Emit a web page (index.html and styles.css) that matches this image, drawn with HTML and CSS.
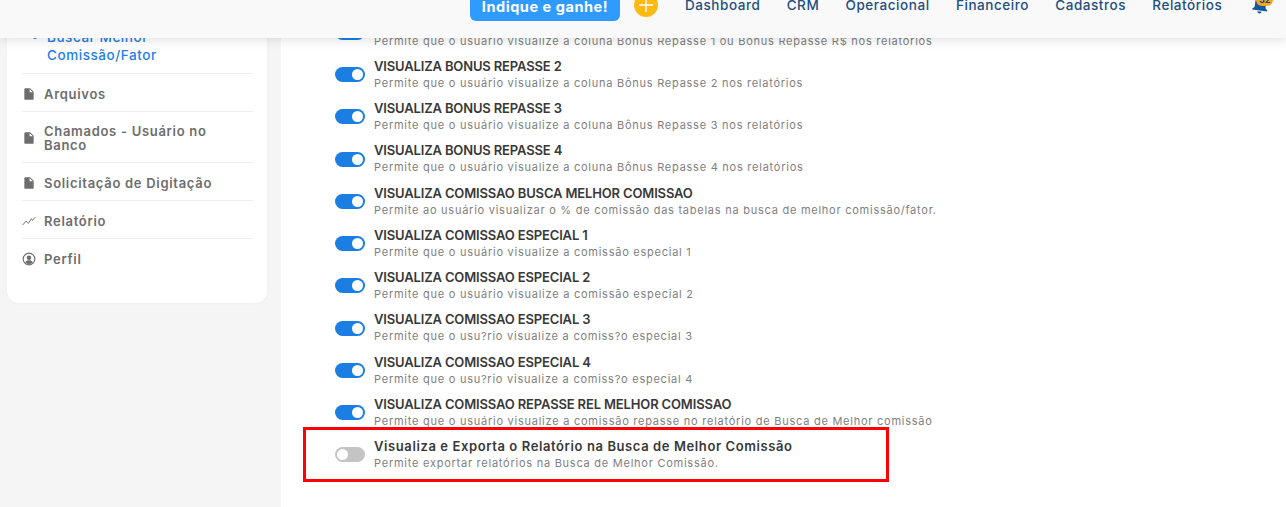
FILE: index.html
```html
<!DOCTYPE html>
<html lang="pt-BR">
<head>
<meta charset="utf-8">
<title>Permissões</title>
<link rel="stylesheet" href="styles.css">
</head>
<body>
<header class="topbar">
  <div class="topbar-row">
    <a class="cta">Indique e ganhe!</a>
    <span class="plus"><svg width="24" height="24" viewBox="0 0 24 24"><path d="M12 5v14M5 12h14" stroke="#fff" stroke-width="1.4" fill="none"/></svg></span>
    <nav class="nav">
      <a>Dashboard</a><a>CRM</a><a>Operacional</a><a>Financeiro</a><a>Cadastros</a><a>Relatórios</a>
    </nav>
    <span class="bell">
      <svg width="18" height="26" viewBox="0 0 18 26"><path transform="rotate(8 9 20)" d="M9 25.500a2.200 2.200 0 0 0 2.200-2H6.800a2.200 2.200 0 0 0 2.200 2zM16.500 21.500l-2-2v-8c0-3-1.700-5.300-4-5.800V5a1.500 1.500 0 0 0-3 0v.7c-2.300.5-4 2.800-4 5.800v8l-2 2v1h15z" fill="#125a9c"/></svg>
      <span class="bell-badge">32</span>
    </span>
  </div>
</header>

<div class="layout">
  <aside class="side">
    <div class="card">
      <div class="sub-item">
        <span class="dot"></span>
        <a class="sub-link">Buscar Melhor Comissão/Fator</a>
      </div>
      <a class="menu-item"><svg class="ico" viewBox="0 0 24 24"><path d="M6 2h8l6 6v12a2 2 0 0 1-2 2H6a2 2 0 0 1-2-2V4a2 2 0 0 1 2-2zm7 1.500V9h5.500z" fill-rule="evenodd"/></svg><span class="menu-label">Arquivos</span></a>
      <a class="menu-item tall"><svg class="ico" viewBox="0 0 24 24"><path d="M6 2h8l6 6v12a2 2 0 0 1-2 2H6a2 2 0 0 1-2-2V4a2 2 0 0 1 2-2zm7 1.500V9h5.500z" fill-rule="evenodd"/></svg><span class="menu-label">Chamados - Usuário no Banco</span></a>
      <a class="menu-item"><svg class="ico" viewBox="0 0 24 24"><path d="M6 2h8l6 6v12a2 2 0 0 1-2 2H6a2 2 0 0 1-2-2V4a2 2 0 0 1 2-2zm7 1.500V9h5.500z" fill-rule="evenodd"/></svg><span class="menu-label">Solicitação de Digitação</span></a>
      <a class="menu-item"><svg class="ico" viewBox="0 0 24 24"><path d="M1 19l6-7 4 4 5-8 2 3 5-6" fill="none" stroke="#6d6d6d" stroke-width="1.600"/></svg><span class="menu-label">Relatório</span></a>
      <a class="menu-item"><svg class="ico" viewBox="0 0 24 24"><circle cx="12" cy="12" r="10" fill="none" stroke="#6d6d6d" stroke-width="2"/><circle cx="12" cy="10" r="3.800"/><path d="M5.500 18c1-3 4-4 6.500-4s5.500 1 6.500 4a9 9 0 0 1-13 0z"/></svg><span class="menu-label">Perfil</span></a>
    </div>
  </aside>

  <main class="panel">
    <div class="perm"><span class="toggle"></span><div><div class="perm-title">VISUALIZA BONUS REPASSE 1</div><div class="perm-desc">Permite que o usuário visualize a coluna Bônus Repasse 1 ou Bônus Repasse R$ nos relatórios</div></div></div>
    <div class="perm"><span class="toggle"></span><div><div class="perm-title">VISUALIZA BONUS REPASSE 2</div><div class="perm-desc">Permite que o usuário visualize a coluna Bônus Repasse 2 nos relatórios</div></div></div>
    <div class="perm"><span class="toggle"></span><div><div class="perm-title">VISUALIZA BONUS REPASSE 3</div><div class="perm-desc">Permite que o usuário visualize a coluna Bônus Repasse 3 nos relatórios</div></div></div>
    <div class="perm"><span class="toggle"></span><div><div class="perm-title">VISUALIZA BONUS REPASSE 4</div><div class="perm-desc">Permite que o usuário visualize a coluna Bônus Repasse 4 nos relatórios</div></div></div>
    <div class="perm"><span class="toggle"></span><div><div class="perm-title">VISUALIZA COMISSAO BUSCA MELHOR COMISSAO</div><div class="perm-desc">Permite ao usuário visualizar o % de comissão das tabelas na busca de melhor comissão/fator.</div></div></div>
    <div class="perm"><span class="toggle"></span><div><div class="perm-title">VISUALIZA COMISSAO ESPECIAL 1</div><div class="perm-desc">Permite que o usuário visualize a comissão especial 1</div></div></div>
    <div class="perm"><span class="toggle"></span><div><div class="perm-title">VISUALIZA COMISSAO ESPECIAL 2</div><div class="perm-desc">Permite que o usuário visualize a comissão especial 2</div></div></div>
    <div class="perm"><span class="toggle"></span><div><div class="perm-title">VISUALIZA COMISSAO ESPECIAL 3</div><div class="perm-desc">Permite que o usu?rio visualize a comiss?o especial 3</div></div></div>
    <div class="perm"><span class="toggle"></span><div><div class="perm-title">VISUALIZA COMISSAO ESPECIAL 4</div><div class="perm-desc">Permite que o usu?rio visualize a comiss?o especial 4</div></div></div>
    <div class="perm"><span class="toggle"></span><div><div class="perm-title">VISUALIZA COMISSAO REPASSE REL MELHOR COMISSAO</div><div class="perm-desc">Permite que o usuário visualize a comissão repasse no relatório de Busca de Melhor comissão</div></div></div>
    <div class="perm highlighted"><span class="toggle off"></span><div><div class="perm-title mixed">Visualiza e Exporta o Relatório na Busca de Melhor Comissão</div><div class="perm-desc">Permite exportar relatórios na Busca de Melhor Comissão.</div></div></div>
  </main>
</div>
</body>
</html>
```

FILE: styles.css
```css
*, *::before, *::after { box-sizing: border-box; }
html, body { margin: 0; height: 100%; overflow: hidden; }
body {
  background: #f5f5f5;
  font-family: "Inter", "Open Sans", sans-serif;
  position: relative;
}
.topbar {
  position: absolute;
  top: 0; left: 0; right: 0;
  height: 38px;
  background: #f9f9f9;
  box-shadow: 0 2px 10px rgba(0,0,0,.12);
  z-index: 5;
  overflow: hidden;
}
.topbar-row {
  display: flex;
  align-items: center;
  height: 40px;
  margin-top: -19px;
  padding-left: 470px;
}
.cta {
  width: 150px;
  height: 40px;
  border-radius: 6px;
  background: #2f9bff;
  color: #fff;
  font-weight: 700;
  font-size: 14.500px;
  letter-spacing: .55px;
  display: flex;
  align-items: center;
  justify-content: center;
  padding-top: 11px;
}
.plus {
  width: 24px; height: 24px;
  margin: 8px 0 0 14px;
  border-radius: 50%;
  background: #ffb913;
  display: flex;
}
.nav {
  display: flex;
  gap: 26.300px;
  margin: 8px 0 0 27px;
  color: #1d4f7f;
  font-size: 13.500px;
  font-weight: 500;
  letter-spacing: .55px;
}
.bell { position: relative; margin: 0 0 0 29px; width: 18px; height: 26px; }
.bell svg { display: block; }
.bell-badge {
  position: absolute;
  top: 6px; left: 5px;
  width: 17px; height: 12px;
  border-radius: 7px;
  background: #f5a623;
  color: #1a4f80;
  font-size: 9px;
  font-weight: 700;
  line-height: 12px;
  text-align: center;
}
.layout { display: flex; height: 100%; align-items: flex-start; }
.side { width: 281px; flex: none; padding-left: 7px; }
.card {
  width: 260px;
  height: 303px;
  background: #fff;
  border-radius: 0 0 12px 12px;
  box-shadow: 0 1px 3px rgba(0,0,0,.03);
  padding: 28px 14px 0 15px;
}
.sub-item {
  display: flex;
  height: 46px;
  padding-left: 11px;
  border-bottom: 1px solid #eee;
}
.dot {
  width: 4px; height: 4px;
  border-radius: 50%;
  background: #1976e0;
  margin: 7px 10px 0 0;
  flex: none;
}
.sub-link { color: #1e7de6; font-size: 13.500px; font-weight: 500; letter-spacing: .55px; line-height: 18px; width: 150px; }
.menu-item {
  display: flex;
  align-items: center;
  gap: 8px;
  height: 38px;
  border-bottom: 1px solid #eee;
  color: #6d6d6d;
  font-size: 13px;
  font-weight: 600;
  letter-spacing: .7px;
  line-height: 14px;
  padding: 6px 0 4px;
}
.menu-item.tall { height: 51px; }
.menu-item:last-child { border-bottom: 0; }
.menu-label { width: 175px; }
.ico { width: 14px; height: 14px; flex: none; fill: #6d6d6d; }
.panel {
  flex: 1;
  height: 100%;
  background: #fff;
  padding: 15.800px 0 0 54px;
  display: grid;
  grid-auto-rows: 42.220px;
  align-content: start;
  overflow: hidden;
  position: relative;
}
.perm { display: flex; align-items: flex-start; gap: 9px; }
.toggle {
  width: 30px; height: 15px;
  margin-top: 9.200px;
  border-radius: 8px;
  background: #1a7ee2;
  position: relative;
  flex: none;
}
.toggle::after {
  content: "";
  position: absolute;
  top: 2px; right: 2px;
  width: 11px; height: 11px;
  border-radius: 50%;
  background: #fff;
}
.toggle.off { background: #c4c4c4; }
.toggle.off::after { right: auto; left: 2px; }
.perm-title { color: #383838; font-size: 13px; font-weight: 600; letter-spacing: -.15px; line-height: 17px; white-space: nowrap; }
.perm-title.mixed { letter-spacing: .6px; }
.perm-desc { color: #808080; font-size: 11px; font-weight: 400; line-height: 16px; letter-spacing: .75px; white-space: nowrap; }
.highlighted { position: relative; }
.highlighted::before {
  content: "";
  position: absolute;
  left: -32px; top: -11px;
  width: 586px; height: 55px;
  border: 3px solid #f00;
  pointer-events: none;
}
```
